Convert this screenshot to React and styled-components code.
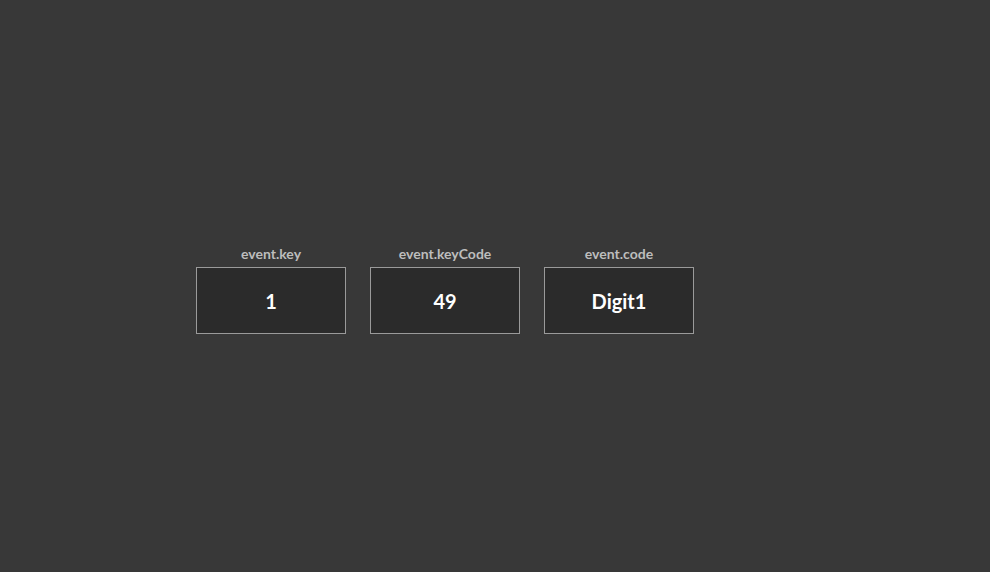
import styled, { createGlobalStyle } from 'styled-components'

const GlobalStyle = createGlobalStyle`
  html, body {
    margin: 0;
    padding: 0;
    background: #383838;
  }
  body {
    font-family: Lato, 'Open Sans', sans-serif;
  }
`

const keys = [
  { label: 'event.key', value: '1' },
  { label: 'event.keyCode', value: '49' },
  { label: 'event.code', value: 'Digit1' },
]

function App() {
  return (
    <>
      <GlobalStyle />
      <Page>
        <Row>
          {keys.map((k) => (
            <Column key={k.label}>
              <Label>{k.label}</Label>
              <ValueBox>{k.value}</ValueBox>
            </Column>
          ))}
        </Row>
      </Page>
    </>
  )
}

export default App

const Page = styled.div`
  height: 572px;
  display: flex;
  align-items: center;
  padding-left: 196px;
  box-sizing: border-box;
`

const Row = styled.div`
  display: flex;
  gap: 24px;
  margin-top: 8px;
`

const Column = styled.div`
  display: flex;
  flex-direction: column;
  align-items: center;
  gap: 6px;
`

const Label = styled.div`
  color: #bdbdbd;
  font-size: 14px;
  font-weight: 700;
  line-height: 15px;
`

const ValueBox = styled.div`
  width: 148px;
  height: 65px;
  border: 1px solid #9a9a9a;
  background: #2b2b2b;
  color: #ffffff;
  font-size: 20px;
  font-weight: 700;
  display: flex;
  align-items: center;
  justify-content: center;
`
